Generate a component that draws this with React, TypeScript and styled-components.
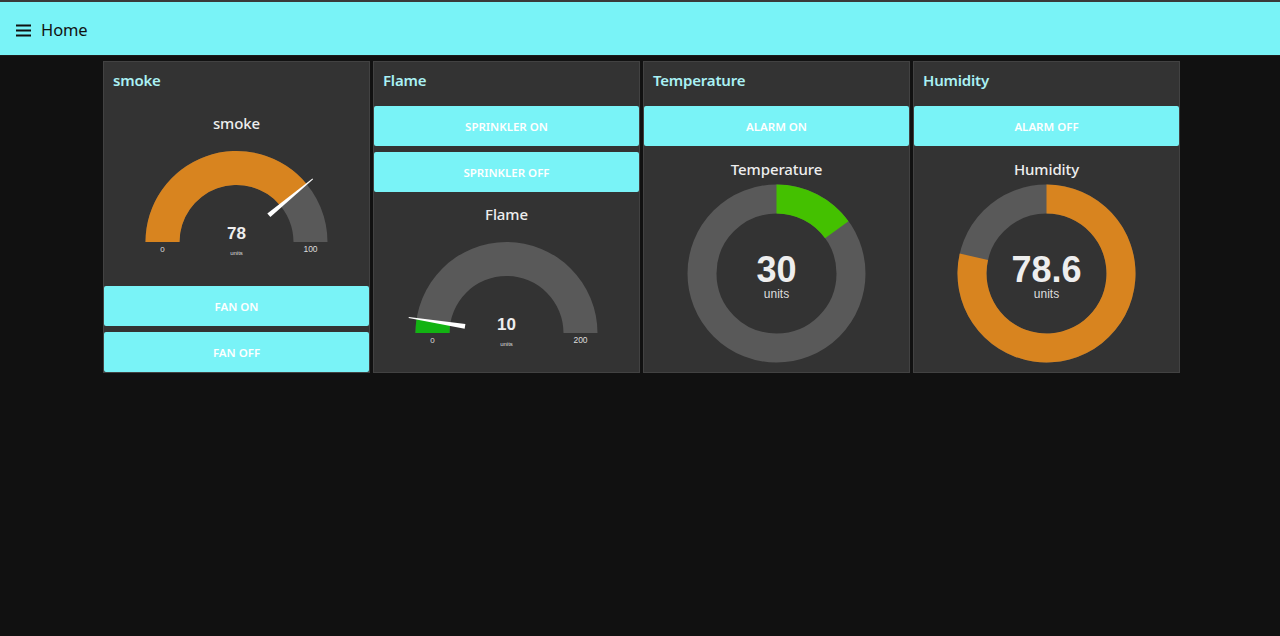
import React from "react";
import styled, { createGlobalStyle } from "styled-components";

const CYAN = "#79f3f7";
const ORANGE = "#d8841f";
const TRACK = "#595959";

const GlobalStyle = createGlobalStyle`
  html, body {
    margin: 0;
    padding: 0;
    background: #111111;
    font-family: "Noto Sans", "Open Sans", Arial, sans-serif;
  }
  * { box-sizing: border-box; }
`;

const Page = styled.div`
  min-height: 636px;
  background: #111111;
`;

const Toolbar = styled.header`
  height: 55px;
  border-top: 2px solid #3a3a3a;
  background: ${CYAN};
  display: flex;
  align-items: center;
  padding: 3px 0 0 15px;
  gap: 8px;
  box-shadow: 0 1px 0 #1c1c1c;
`;

const ToolbarTitle = styled.h1`
  margin: 0;
  font-size: 16.5px;
  font-weight: 400;
  color: #111111;
  line-height: 1;
  letter-spacing: -0.1px;
`;

const Content = styled.main`
  display: flex;
  align-items: stretch;
  gap: 3px;
  padding: 6px 0 0 103px;
`;

const Card = styled.section`
  width: 267px;
  background: #333333;
  border: 1px solid #424242;
  display: flex;
  flex-direction: column;
  gap: 6px;
`;

const CardHeader = styled.div`
  height: 38px;
`;

const CardTitle = styled.div`
  height: 37px;
  line-height: 37px;
  padding-left: 9px;
  font-size: 15px;
  font-weight: 600;
  letter-spacing: -0.2px;
  color: #aaf1f4;
`;

const ActionButton = styled.button`
  height: 40px;
  width: 100%;
  border: none;
  border-radius: 2px;
  background: ${CYAN};
  color: #ffffff;
  font-family: "Noto Sans", "Open Sans", Arial, sans-serif;
  font-size: 11.5px;
  font-weight: 600;
  text-transform: uppercase;
  cursor: pointer;
  padding: 0;
`;

const Widget = styled.div<{ $h: number }>`
  height: ${(p) => p.$h}px;
  display: flex;
  flex-direction: column;
  align-items: center;
`;

const WidgetTitle = styled.div<{ $h: number; $pad?: number }>`
  height: ${(p) => p.$h}px;
  padding-top: ${(p) => p.$pad ?? 0}px;
  line-height: ${(p) => p.$h - (p.$pad ?? 0)}px;
  font-size: 15px;
  font-weight: 500;
  letter-spacing: -0.1px;
  color: #eeeeee;
  text-align: center;
`;

const Chart = styled.svg`
  display: block;
  overflow: visible;
`;

const MenuIcon = () => (
  <svg width="18" height="18" viewBox="0 0 18 18">
    <rect x="1" y="3.5" width="15" height="2" fill="#111" />
    <rect x="1" y="8.5" width="15" height="2" fill="#111" />
    <rect x="1" y="13.5" width="15" height="2" fill="#111" />
  </svg>
);

const semiPt = (cx: number, cy: number, r: number, f: number) => {
  const a = Math.PI * (1 - f);
  return [cx + r * Math.cos(a), cy - r * Math.sin(a)];
};

const semiPath = (cx: number, cy: number, ro: number, ri: number, f0: number, f1: number) => {
  const [x0, y0] = semiPt(cx, cy, ro, f0);
  const [x1, y1] = semiPt(cx, cy, ro, f1);
  const [x2, y2] = semiPt(cx, cy, ri, f1);
  const [x3, y3] = semiPt(cx, cy, ri, f0);
  return `M${x0} ${y0} A${ro} ${ro} 0 0 1 ${x1} ${y1} L${x2} ${y2} A${ri} ${ri} 0 0 0 ${x3} ${y3} Z`;
};

type GaugeProps = { title: string; value: number; max: number; color: string; widgetH: number; titleH: number };

const Gauge = ({ title, value, max, color, widgetH, titleH }: GaugeProps) => {
  const cx = 132.5;
  const cy = 102;
  const ro = 91;
  const ri = 57;
  const f = value / max;
  const a = Math.PI * (1 - f);
  const dx = Math.cos(a);
  const dy = -Math.sin(a);
  const px = -dy;
  const py = dx;
  const r0 = 42;
  const r1 = 99;
  const b0 = 2.4;
  const b1 = 0.5;
  const needle = [
    [cx + dx * r0 + px * b0, cy + dy * r0 + py * b0],
    [cx + dx * r1 + px * b1, cy + dy * r1 + py * b1],
    [cx + dx * r1 - px * b1, cy + dy * r1 - py * b1],
    [cx + dx * r0 - px * b0, cy + dy * r0 - py * b0],
  ]
    .map((p) => p.join(","))
    .join(" ");
  return (
    <Widget $h={widgetH}>
      <WidgetTitle $h={titleH}>{title}</WidgetTitle>
      <Chart width={265} height={140} viewBox="0 0 265 140">
        <path d={semiPath(cx, cy, ro, ri, 0, 1)} fill={TRACK} />
        <path d={semiPath(cx, cy, ro, ri, 0, f)} fill={color} />
        <polygon points={needle} fill="#ffffff" />
        <text x={cx} y={99} textAnchor="middle" fill="#eeeeee" fontFamily="'Liberation Sans', Arial, sans-serif" fontWeight="bold" fontSize="17">
          {value}
        </text>
        <text x={cx} y={114.5} textAnchor="middle" fill="#dddddd" fontFamily="'Liberation Sans', Arial, sans-serif" fontSize="6">
          units
        </text>
        <text x={cx - (ro + ri) / 2} y={112} textAnchor="middle" fill="#dddddd" fontFamily="'Liberation Sans', Arial, sans-serif" fontSize="8">
          0
        </text>
        <text x={cx + (ro + ri) / 2} y={111.5} textAnchor="middle" fill="#dddddd" fontFamily="'Liberation Sans', Arial, sans-serif" fontSize="8.5">
          {max}
        </text>
      </Chart>
    </Widget>
  );
};

type DonutProps = { title: string; value: number; max: number; color: string };

const donutPt = (cx: number, cy: number, r: number, a: number) => [cx + r * Math.sin(a), cy - r * Math.cos(a)];

const Donut = ({ title, value, max, color }: DonutProps) => {
  const cx = 132.5;
  const cy = 89.5;
  const ro = 89;
  const ri = 60;
  const a = (value / max) * Math.PI * 2;
  const large = a > Math.PI ? 1 : 0;
  const [x0, y0] = donutPt(cx, cy, ro, 0);
  const [x1, y1] = donutPt(cx, cy, ro, a);
  const [x2, y2] = donutPt(cx, cy, ri, a);
  const [x3, y3] = donutPt(cx, cy, ri, 0);
  const d = `M${x0} ${y0} A${ro} ${ro} 0 ${large} 1 ${x1} ${y1} L${x2} ${y2} A${ri} ${ri} 0 ${large} 0 ${x3} ${y3} Z`;
  const rm = (ro + ri) / 2;
  return (
    <Widget $h={216}>
      <WidgetTitle $h={32} $pad={3}>{title}</WidgetTitle>
      <Chart width={265} height={184} viewBox="0 0 265 184">
        <circle cx={cx} cy={cy} r={rm} fill="none" stroke={TRACK} strokeWidth={ro - ri} />
        <path d={d} fill={color} />
        <text x={cx} y={cy + 8} textAnchor="middle" fill="#eeeeee" fontFamily="'Liberation Sans', Arial, sans-serif" fontWeight="bold" fontSize="36">
          {value}
        </text>
        <text x={cx} y={cy + 24} textAnchor="middle" fill="#dddddd" fontFamily="'Liberation Sans', Arial, sans-serif" fontSize="12">
          units
        </text>
      </Chart>
    </Widget>
  );
};

export default function App() {
  return (
    <Page>
      <GlobalStyle />
      <Toolbar>
        <MenuIcon />
        <ToolbarTitle>Home</ToolbarTitle>
      </Toolbar>
      <Content>
        <Card>
          <CardHeader>
            <CardTitle>smoke</CardTitle>
          </CardHeader>
          <Gauge title="smoke" value={78} max={100} color={ORANGE} widgetH={174} titleH={34} />
          <ActionButton>Fan on</ActionButton>
          <ActionButton>Fan off</ActionButton>
        </Card>
        <Card>
          <CardHeader>
            <CardTitle>Flame</CardTitle>
          </CardHeader>
          <ActionButton>Sprinkler on</ActionButton>
          <ActionButton>Sprinkler off</ActionButton>
          <Gauge title="Flame" value={10} max={200} color="#12b312" widgetH={173} titleH={33} />
        </Card>
        <Card>
          <CardHeader>
            <CardTitle>Temperature</CardTitle>
          </CardHeader>
          <ActionButton>Alarm on</ActionButton>
          <Donut title="Temperature" value={30} max={200} color="#44c100" />
        </Card>
        <Card>
          <CardHeader>
            <CardTitle>Humidity</CardTitle>
          </CardHeader>
          <ActionButton>Alarm off</ActionButton>
          <Donut title="Humidity" value={78.6} max={100} color={ORANGE} />
        </Card>
      </Content>
    </Page>
  );
}
